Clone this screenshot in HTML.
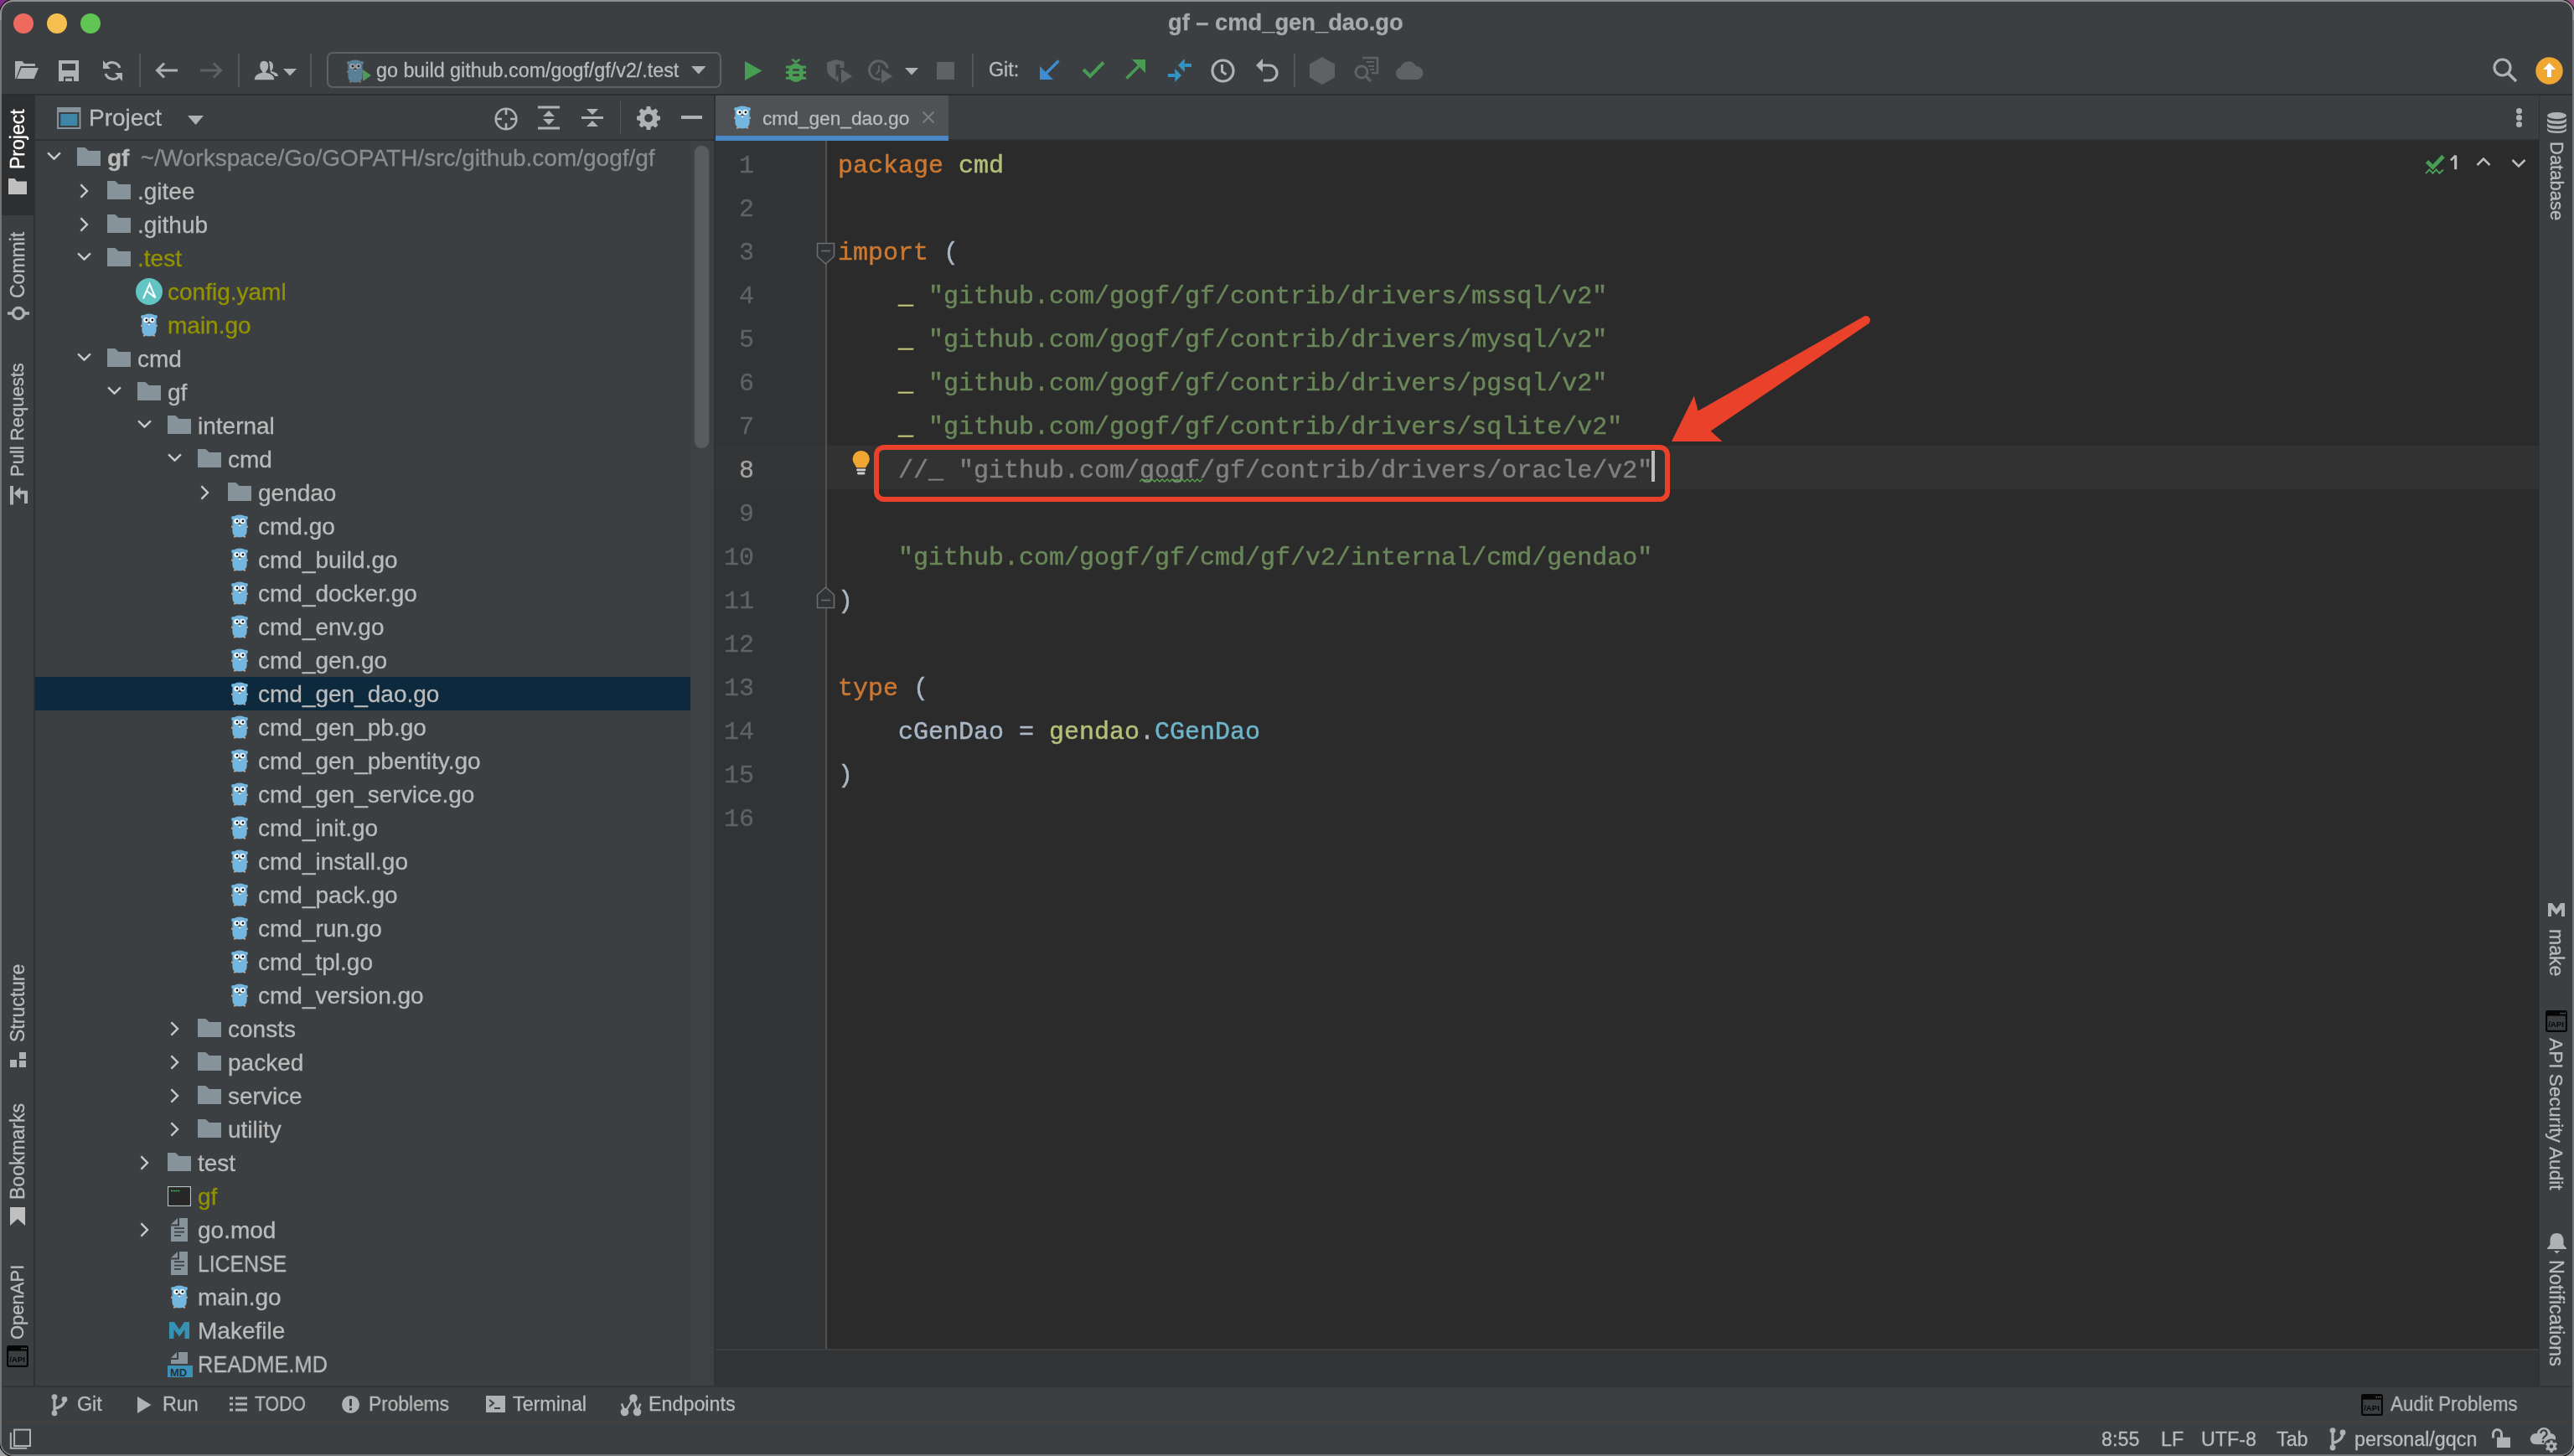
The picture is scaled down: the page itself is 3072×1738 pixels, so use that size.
<!DOCTYPE html><html><head><meta charset="utf-8"><style>
*{margin:0;padding:0;box-sizing:border-box}
html,body{width:3072px;height:1738px;overflow:hidden;background:#9c9c9c}
body{font-family:"Liberation Sans",sans-serif;position:relative}
.a{position:absolute}
.t{position:absolute;white-space:pre;color:#bbbbbb;will-change:transform;-webkit-text-stroke:0.3px currentColor}
svg{position:absolute;overflow:visible}
.code{position:absolute;font-family:"Liberation Mono",monospace;font-size:30px;line-height:52px;white-space:pre;color:#a9b7c6;will-change:transform;-webkit-text-stroke:0.45px currentColor}
.ln{position:absolute;font-family:"Liberation Mono",monospace;font-size:30px;line-height:52px;white-space:pre;color:#606366;text-align:right;width:80px;will-change:transform;-webkit-text-stroke:0.3px currentColor}
.k{color:#cc7832}.s{color:#6a8759}.p{color:#b3c07a}.ty{color:#6fb4c9}.c{color:#808080}.u{color:#c5cb7a}
</style></head><body><div class="a" style="left:0px;top:0px;width:40px;height:40px;background:#7d2a86;"></div><div class="a" style="left:3032px;top:0px;width:40px;height:40px;background:#9a5480;"></div><div class="a" style="left:0px;top:1698px;width:40px;height:40px;background:#a0a0a0;"></div><div class="a" style="left:3032px;top:1698px;width:40px;height:40px;background:#a0a0a0;"></div><div class="a" style="left:0px;top:0px;width:3072px;height:1738px;background:#737577;border-radius:16px;box-shadow:0 0 0 1px #000"></div><div class="a" style="left:0px;top:0px;width:3072px;height:24px;background:#8f8f8f;border-radius:16px 16px 0 0"></div><div class="a" style="left:2px;top:2px;width:3068px;height:1734px;background:#3c3f41;border-radius:14px"></div><div class="a" style="left:2px;top:112px;width:3068px;height:2px;background:#2b2d2f;"></div><div class="a" style="left:2px;top:114px;width:39px;height:1540px;background:#3c3f41;"></div><div class="a" style="left:2px;top:114px;width:39px;height:143px;background:#2d2f31;"></div><div class="a" style="left:40px;top:114px;width:2px;height:1540px;background:#2d2f31;"></div><div class="a" style="left:42px;top:114px;width:810px;height:52px;background:#3c3f41;"></div><div class="a" style="left:42px;top:166px;width:810px;height:2px;background:#2f3133;"></div><div class="a" style="left:824px;top:168px;width:28px;height:1486px;background:#3e4143;"></div><div class="a" style="left:852px;top:114px;width:2px;height:1540px;background:#2f3133;"></div><div class="a" style="left:854px;top:114px;width:2177px;height:52px;background:#3c3f41;"></div><div class="a" style="left:854px;top:114px;width:278px;height:48px;background:#4e5254;"></div><div class="a" style="left:854px;top:162px;width:278px;height:6px;background:#4a88c7;"></div><div class="a" style="left:1132px;top:166px;width:1899px;height:2px;background:#2f3133;"></div><div class="a" style="left:854px;top:168px;width:133px;height:1442px;background:#313335;"></div><div class="a" style="left:985px;top:168px;width:2px;height:1442px;background:#4f5153;"></div><div class="a" style="left:987px;top:168px;width:2044px;height:1442px;background:#2b2b2b;"></div><div class="a" style="left:987px;top:532px;width:2044px;height:52px;background:#323232;"></div><div class="a" style="left:854px;top:532px;width:131px;height:52px;background:#333537;"></div><div class="a" style="left:854px;top:1610px;width:2177px;height:2px;background:#3b3d3f;"></div><div class="a" style="left:854px;top:1612px;width:2177px;height:42px;background:#313335;"></div><div class="a" style="left:3030px;top:114px;width:1px;height:1540px;background:#2f3133;"></div><div class="a" style="left:3031px;top:114px;width:39px;height:1540px;background:#3c3f41;"></div><div class="a" style="left:2px;top:1654px;width:3068px;height:2px;background:#323436;"></div><div class="a" style="left:2px;top:1656px;width:3068px;height:40px;background:#3c3f41;"></div><div class="a" style="left:2px;top:1696px;width:3068px;height:2px;background:#433f3c;"></div><div class="a" style="left:2px;top:1698px;width:3068px;height:38px;background:#3c3f41;border-radius:0 0 14px 14px"></div><svg width="0" height="0" style="position:absolute"><defs>
<symbol id="folder" viewBox="0 0 28 22"><path d="M0 0H8.6Q9.6 0 10.4 .8L13.6 4H28V22H0Z" fill="#87939a"/></symbol>
<symbol id="chd" viewBox="0 0 17 10"><path d="M1.1 1.3L8.5 8.7L15.9 1.3" fill="none" stroke="#c9c9c9" stroke-width="2.4"/></symbol>
<symbol id="chr" viewBox="0 0 11 18"><path d="M1.4 1.4L9 9L1.4 16.6" fill="none" stroke="#c9c9c9" stroke-width="2.4"/></symbol>
<symbol id="gopher" viewBox="0 0 20 28">
<circle cx="2.2" cy="4.2" r="2.1" fill="#73b7e0"/><circle cx="17.8" cy="4.2" r="2.1" fill="#73b7e0"/>
<circle cx="1" cy="14.8" r="1.3" fill="#c9977a"/><circle cx="19" cy="14.8" r="1.3" fill="#c9977a"/>
<circle cx="4.2" cy="26.6" r="1.4" fill="#c9977a"/><circle cx="15.8" cy="26.6" r="1.4" fill="#c9977a"/>
<path d="M10 .6C16.3 .6 18.6 3.5 18.6 8.5V20C18.6 25 15 27.4 10 27.4S1.4 25 1.4 20V8.5C1.4 3.5 3.7 .6 10 .6Z" fill="#73b7e0"/>
<circle cx="6.4" cy="8" r="3.1" fill="#fff"/><circle cx="13.4" cy="8" r="3.1" fill="#fff"/>
<circle cx="6.9" cy="8" r="1.4" fill="#111"/><circle cx="13.9" cy="8" r="1.4" fill="#111"/>
<rect x="9" y="12" width="2" height="2" fill="#fff"/><ellipse cx="10" cy="11.4" rx="1.6" ry="1.1" fill="#5a3d2b"/>
</symbol>
<symbol id="ansible" viewBox="0 0 32 32"><circle cx="16" cy="16" r="16" fill="#62c4c3"/><path d="M9 24.5L16.5 6.8L23.5 23.5L12.8 15" fill="none" stroke="#fff" stroke-width="2"/></symbol>
<symbol id="doc" viewBox="0 0 20 28"><path d="M0 7.6L8 0V7.6Z" fill="#87939a"/><path d="M10 0H20V28H0V9.6H10Z" fill="#87939a"/><path d="M4 12.2H16M4 16.6H16M4 20.8H12" stroke="#3c3f41" stroke-width="1.7"/></symbol>
<symbol id="term" viewBox="0 0 28 24"><rect x=".6" y=".6" width="26.8" height="22.8" fill="#111" stroke="#b9c3c6" stroke-width="1.2"/><rect x="2" y="2" width="24" height="20" fill="#272727"/><path d="M4 5.5H15" stroke="#39c45a" stroke-width="1.6" stroke-dasharray="2 .8"/></symbol>
<symbol id="mk" viewBox="0 0 24 20"><path d="M0 20V0H6L12 9L18 0H24V20H18.5V9L12 17.5L5.5 9V20Z" fill="#3592b5"/></symbol>
<symbol id="md" viewBox="0 0 30 30"><path d="M4 7L11 0V7Z" fill="#87939a"/><path d="M13 0H24V14H4V9H13Z" fill="#87939a"/><rect x="0" y="16" width="30" height="14" fill="#3b91b6"/><text x="3" y="28.5" font-family="Liberation Sans" font-weight="bold" font-size="13" fill="#22333d">MD</text></symbol>
</defs></svg><div class="a" style="left:42px;top:808px;width:782px;height:40px;background:#0d293e;"></div><svg style="left:56px;top:181px" width="17" height="10"><use href="#chd" width="17" height="10"/></svg><svg style="left:92px;top:176px" width="28" height="22"><use href="#folder" width="28" height="22"/></svg><div class="t" style="left:128px;top:169px;font-size:28px;line-height:40px;color:#bbbbbb"><b>gf</b> <span style="color:#8c8c8c;margin-left:5.5px">~/Workspace/Go/GOPATH/src/github.com/gogf/gf</span></div><svg style="left:95px;top:219px" width="11" height="18"><use href="#chr" width="11" height="18"/></svg><svg style="left:128px;top:216px" width="28" height="22"><use href="#folder" width="28" height="22"/></svg><div class="t" style="left:164px;top:209px;font-size:28px;line-height:40px;color:#bbbbbb;">.gitee</div><svg style="left:95px;top:259px" width="11" height="18"><use href="#chr" width="11" height="18"/></svg><svg style="left:128px;top:256px" width="28" height="22"><use href="#folder" width="28" height="22"/></svg><div class="t" style="left:164px;top:249px;font-size:28px;line-height:40px;color:#bbbbbb;">.github</div><svg style="left:92px;top:301px" width="17" height="10"><use href="#chd" width="17" height="10"/></svg><svg style="left:128px;top:296px" width="28" height="22"><use href="#folder" width="28" height="22"/></svg><div class="t" style="left:164px;top:289px;font-size:28px;line-height:40px;color:#949200;">.test</div><svg style="left:162px;top:332px" width="32" height="32"><use href="#ansible" width="32" height="32"/></svg><div class="t" style="left:200px;top:329px;font-size:28px;line-height:40px;color:#949200;">config.yaml</div><svg style="left:168px;top:374px" width="20" height="28"><use href="#gopher" width="20" height="28"/></svg><div class="t" style="left:200px;top:369px;font-size:28px;line-height:40px;color:#949200;">main.go</div><svg style="left:92px;top:421px" width="17" height="10"><use href="#chd" width="17" height="10"/></svg><svg style="left:128px;top:416px" width="28" height="22"><use href="#folder" width="28" height="22"/></svg><div class="t" style="left:164px;top:409px;font-size:28px;line-height:40px;color:#bbbbbb;">cmd</div><svg style="left:128px;top:461px" width="17" height="10"><use href="#chd" width="17" height="10"/></svg><svg style="left:164px;top:456px" width="28" height="22"><use href="#folder" width="28" height="22"/></svg><div class="t" style="left:200px;top:449px;font-size:28px;line-height:40px;color:#bbbbbb;">gf</div><svg style="left:164px;top:501px" width="17" height="10"><use href="#chd" width="17" height="10"/></svg><svg style="left:200px;top:496px" width="28" height="22"><use href="#folder" width="28" height="22"/></svg><div class="t" style="left:236px;top:489px;font-size:28px;line-height:40px;color:#bbbbbb;">internal</div><svg style="left:200px;top:541px" width="17" height="10"><use href="#chd" width="17" height="10"/></svg><svg style="left:236px;top:536px" width="28" height="22"><use href="#folder" width="28" height="22"/></svg><div class="t" style="left:272px;top:529px;font-size:28px;line-height:40px;color:#bbbbbb;">cmd</div><svg style="left:239px;top:579px" width="11" height="18"><use href="#chr" width="11" height="18"/></svg><svg style="left:272px;top:576px" width="28" height="22"><use href="#folder" width="28" height="22"/></svg><div class="t" style="left:308px;top:569px;font-size:28px;line-height:40px;color:#bbbbbb;">gendao</div><svg style="left:276px;top:614px" width="20" height="28"><use href="#gopher" width="20" height="28"/></svg><div class="t" style="left:308px;top:609px;font-size:28px;line-height:40px;color:#bbbbbb;">cmd.go</div><svg style="left:276px;top:654px" width="20" height="28"><use href="#gopher" width="20" height="28"/></svg><div class="t" style="left:308px;top:649px;font-size:28px;line-height:40px;color:#bbbbbb;">cmd_build.go</div><svg style="left:276px;top:694px" width="20" height="28"><use href="#gopher" width="20" height="28"/></svg><div class="t" style="left:308px;top:689px;font-size:28px;line-height:40px;color:#bbbbbb;">cmd_docker.go</div><svg style="left:276px;top:734px" width="20" height="28"><use href="#gopher" width="20" height="28"/></svg><div class="t" style="left:308px;top:729px;font-size:28px;line-height:40px;color:#bbbbbb;">cmd_env.go</div><svg style="left:276px;top:774px" width="20" height="28"><use href="#gopher" width="20" height="28"/></svg><div class="t" style="left:308px;top:769px;font-size:28px;line-height:40px;color:#bbbbbb;">cmd_gen.go</div><svg style="left:276px;top:814px" width="20" height="28"><use href="#gopher" width="20" height="28"/></svg><div class="t" style="left:308px;top:809px;font-size:28px;line-height:40px;color:#bbbbbb;">cmd_gen_dao.go</div><svg style="left:276px;top:854px" width="20" height="28"><use href="#gopher" width="20" height="28"/></svg><div class="t" style="left:308px;top:849px;font-size:28px;line-height:40px;color:#bbbbbb;">cmd_gen_pb.go</div><svg style="left:276px;top:894px" width="20" height="28"><use href="#gopher" width="20" height="28"/></svg><div class="t" style="left:308px;top:889px;font-size:28px;line-height:40px;color:#bbbbbb;">cmd_gen_pbentity.go</div><svg style="left:276px;top:934px" width="20" height="28"><use href="#gopher" width="20" height="28"/></svg><div class="t" style="left:308px;top:929px;font-size:28px;line-height:40px;color:#bbbbbb;">cmd_gen_service.go</div><svg style="left:276px;top:974px" width="20" height="28"><use href="#gopher" width="20" height="28"/></svg><div class="t" style="left:308px;top:969px;font-size:28px;line-height:40px;color:#bbbbbb;">cmd_init.go</div><svg style="left:276px;top:1014px" width="20" height="28"><use href="#gopher" width="20" height="28"/></svg><div class="t" style="left:308px;top:1009px;font-size:28px;line-height:40px;color:#bbbbbb;">cmd_install.go</div><svg style="left:276px;top:1054px" width="20" height="28"><use href="#gopher" width="20" height="28"/></svg><div class="t" style="left:308px;top:1049px;font-size:28px;line-height:40px;color:#bbbbbb;">cmd_pack.go</div><svg style="left:276px;top:1094px" width="20" height="28"><use href="#gopher" width="20" height="28"/></svg><div class="t" style="left:308px;top:1089px;font-size:28px;line-height:40px;color:#bbbbbb;">cmd_run.go</div><svg style="left:276px;top:1134px" width="20" height="28"><use href="#gopher" width="20" height="28"/></svg><div class="t" style="left:308px;top:1129px;font-size:28px;line-height:40px;color:#bbbbbb;">cmd_tpl.go</div><svg style="left:276px;top:1174px" width="20" height="28"><use href="#gopher" width="20" height="28"/></svg><div class="t" style="left:308px;top:1169px;font-size:28px;line-height:40px;color:#bbbbbb;">cmd_version.go</div><svg style="left:203px;top:1219px" width="11" height="18"><use href="#chr" width="11" height="18"/></svg><svg style="left:236px;top:1216px" width="28" height="22"><use href="#folder" width="28" height="22"/></svg><div class="t" style="left:272px;top:1209px;font-size:28px;line-height:40px;color:#bbbbbb;">consts</div><svg style="left:203px;top:1259px" width="11" height="18"><use href="#chr" width="11" height="18"/></svg><svg style="left:236px;top:1256px" width="28" height="22"><use href="#folder" width="28" height="22"/></svg><div class="t" style="left:272px;top:1249px;font-size:28px;line-height:40px;color:#bbbbbb;">packed</div><svg style="left:203px;top:1299px" width="11" height="18"><use href="#chr" width="11" height="18"/></svg><svg style="left:236px;top:1296px" width="28" height="22"><use href="#folder" width="28" height="22"/></svg><div class="t" style="left:272px;top:1289px;font-size:28px;line-height:40px;color:#bbbbbb;">service</div><svg style="left:203px;top:1339px" width="11" height="18"><use href="#chr" width="11" height="18"/></svg><svg style="left:236px;top:1336px" width="28" height="22"><use href="#folder" width="28" height="22"/></svg><div class="t" style="left:272px;top:1329px;font-size:28px;line-height:40px;color:#bbbbbb;">utility</div><svg style="left:167px;top:1379px" width="11" height="18"><use href="#chr" width="11" height="18"/></svg><svg style="left:200px;top:1376px" width="28" height="22"><use href="#folder" width="28" height="22"/></svg><div class="t" style="left:236px;top:1369px;font-size:28px;line-height:40px;color:#bbbbbb;">test</div><svg style="left:200px;top:1416px" width="28" height="24"><use href="#term" width="28" height="24"/></svg><div class="t" style="left:236px;top:1409px;font-size:28px;line-height:40px;color:#949200;">gf</div><svg style="left:167px;top:1459px" width="11" height="18"><use href="#chr" width="11" height="18"/></svg><svg style="left:204px;top:1454px" width="20" height="28"><use href="#doc" width="20" height="28"/></svg><div class="t" style="left:236px;top:1449px;font-size:28px;line-height:40px;color:#bbbbbb;">go.mod</div><svg style="left:204px;top:1494px" width="20" height="28"><use href="#doc" width="20" height="28"/></svg><div class="t" style="left:236px;top:1489px;font-size:28px;line-height:40px;color:#bbbbbb;;transform:scaleX(0.885);transform-origin:0 0">LICENSE</div><svg style="left:204px;top:1534px" width="20" height="28"><use href="#gopher" width="20" height="28"/></svg><div class="t" style="left:236px;top:1529px;font-size:28px;line-height:40px;color:#bbbbbb;">main.go</div><svg style="left:202px;top:1578px" width="24" height="20"><use href="#mk" width="24" height="20"/></svg><div class="t" style="left:236px;top:1569px;font-size:28px;line-height:40px;color:#bbbbbb;">Makefile</div><svg style="left:200px;top:1614px" width="30" height="30"><use href="#md" width="30" height="30"/></svg><div class="t" style="left:236px;top:1609px;font-size:28px;line-height:40px;color:#bbbbbb;;transform:scaleX(0.905);transform-origin:0 0">README.MD</div><div class="ln" style="left:819.5px;top:171.5px;">1</div><div class="code" style="left:1000px;top:172px"><span class="k">package</span> <span class="p">cmd</span></div><div class="ln" style="left:819.5px;top:223.5px;">2</div><div class="ln" style="left:819.5px;top:275.5px;">3</div><div class="code" style="left:1000px;top:276px"><span class="k">import</span> (</div><div class="ln" style="left:819.5px;top:327.5px;">4</div><div class="code" style="left:1000px;top:328px">    <span class="u">_</span> <span class="s">"github.com/gogf/gf/contrib/drivers/mssql/v2"</span></div><div class="ln" style="left:819.5px;top:379.5px;">5</div><div class="code" style="left:1000px;top:380px">    <span class="u">_</span> <span class="s">"github.com/gogf/gf/contrib/drivers/mysql/v2"</span></div><div class="ln" style="left:819.5px;top:431.5px;">6</div><div class="code" style="left:1000px;top:432px">    <span class="u">_</span> <span class="s">"github.com/gogf/gf/contrib/drivers/pgsql/v2"</span></div><div class="ln" style="left:819.5px;top:483.5px;">7</div><div class="code" style="left:1000px;top:484px">    <span class="u">_</span> <span class="s">"github.com/gogf/gf/contrib/drivers/sqlite/v2"</span></div><div class="ln" style="left:819.5px;top:535.5px;color:#a4a3a3">8</div><div class="code" style="left:1000px;top:536px">    <span class="c">//_ "github.com/gogf/gf/contrib/drivers/oracle/v2"</span></div><div class="ln" style="left:819.5px;top:587.5px;">9</div><div class="ln" style="left:819.5px;top:639.5px;">10</div><div class="code" style="left:1000px;top:640px">    <span class="s">"github.com/gogf/gf/cmd/gf/v2/internal/cmd/gendao"</span></div><div class="ln" style="left:819.5px;top:691.5px;">11</div><div class="code" style="left:1000px;top:692px">)</div><div class="ln" style="left:819.5px;top:743.5px;">12</div><div class="ln" style="left:819.5px;top:795.5px;">13</div><div class="code" style="left:1000px;top:796px"><span class="k">type</span> (</div><div class="ln" style="left:819.5px;top:847.5px;">14</div><div class="code" style="left:1000px;top:848px">    cGenDao = <span class="p">gendao</span>.<span class="ty">CGenDao</span></div><div class="ln" style="left:819.5px;top:899.5px;">15</div><div class="code" style="left:1000px;top:900px">)</div><div class="ln" style="left:819.5px;top:951.5px;">16</div><svg style="left:974px;top:289px" width="24" height="30"><path d="M1.5 1.5H21.5V17L11.5 26L1.5 17Z" fill="#313335" stroke="#6a6c6e" stroke-width="1.6"/><path d="M6 10.5H17" stroke="#6a6c6e" stroke-width="1.6"/></svg><svg style="left:974px;top:699px" width="24" height="30"><path d="M1.5 26.5H21.5V11L11.5 2L1.5 11Z" fill="#313335" stroke="#6a6c6e" stroke-width="1.6"/><path d="M6 17.5H17" stroke="#6a6c6e" stroke-width="1.6"/></svg><svg style="left:1016px;top:536px" width="24" height="32"><path d="M11.7 1.9A10.1 10.1 0 0 1 21.8 12C21.8 15.5 19.5 18 17.2 22.3H6.2C3.9 18 1.6 15.5 1.6 12A10.1 10.1 0 0 1 11.7 1.9Z" fill="#f0a732"/><rect x="6.2" y="23.4" width="11" height="2.8" rx="1" fill="#cfcfcf"/><rect x="7" y="27.6" width="9.4" height="2.8" rx="1.4" fill="#cfcfcf"/></svg><svg style="left:1360px;top:570px" width="76" height="8"><path d="M0 5 L3 2 L6 5 L9 2 L12 5 L15 2 L18 5 L21 2 L24 5 L27 2 L30 5 L33 2 L36 5 L39 2 L42 5 L45 2 L48 5 L51 2 L54 5 L57 2 L60 5 L63 2 L66 5 L69 2 L72 5 L75 2" fill="none" stroke="#56a34a" stroke-width="1.3"/></svg><div class="a" style="left:1971px;top:538px;width:4px;height:37px;background:#bbbbbb;"></div><div class="a" style="left:1043px;top:531px;width:949.5px;height:68px;border:6.6px solid #e9412a;border-radius:12px"></div><svg style="left:0;top:0" width="3072" height="1738"><path d="M2223 378.5L2026.6 490.5L2021.8 472.6L1995 526.9L2055.5 526.9L2041.7 514.5L2231.3 385.4Z" fill="#e9412a"/><circle cx="2227" cy="382" r="5" fill="#e9412a"/></svg><svg style="left:2890px;top:180px" width="40" height="32"><path d="M6.5 12.8L13.5 19.6L26 6.5" fill="none" stroke="#499c54" stroke-width="4.8"/><path d="M5 27.2L9.5 22.5L13.5 26.8L17.5 22.5L21.5 26.8L26 22.5" fill="none" stroke="#499c54" stroke-width="1.9"/></svg><svg style="left:2922px;top:184px" width="12" height="20"><path d="M8.7 1.6V18.2" stroke="#bdbdbd" stroke-width="3.1"/><path d="M3 7.4L8.7 1.6" stroke="#bdbdbd" stroke-width="2.6"/></svg><svg style="left:2955px;top:187px" width="18" height="12"><path d="M1.5 10L9 2.5L16.5 10" fill="none" stroke="#bdbdbd" stroke-width="2.5"/></svg><svg style="left:2997px;top:188.5px" width="18" height="12"><path d="M1.5 2L9 9.5L16.5 2" fill="none" stroke="#bdbdbd" stroke-width="2.5"/></svg><svg style="left:876px;top:126px" width="20" height="28"><use href="#gopher" width="20" height="28"/></svg><div class="t" style="left:910px;top:124.5px;font-size:22.7px;line-height:32px;color:#bbbbbb;">cmd_gen_dao.go</div><svg style="left:1100px;top:132px" width="16" height="16"><path d="M1.5 1.5L14.5 14.5M14.5 1.5L1.5 14.5" stroke="#7b7e80" stroke-width="2"/></svg><div class="a" style="left:3002.5px;top:128.5px;width:7px;height:7px;border-radius:50%;background:#afb1b3"></div><div class="a" style="left:3002.5px;top:136.5px;width:7px;height:7px;border-radius:50%;background:#afb1b3"></div><div class="a" style="left:3002.5px;top:144.5px;width:7px;height:7px;border-radius:50%;background:#afb1b3"></div><svg style="left:67.5px;top:128px" width="29" height="26"><rect x="0" y="0" width="28.5" height="26" fill="#87939a"/><rect x="2" y="6" width="24.5" height="18" fill="#3c3f41"/><rect x="4.3" y="8" width="20" height="14" fill="#3d86a8"/></svg><div class="t" style="left:106px;top:125px;font-size:28px;line-height:32px;color:#bbbbbb;">Project</div><svg style="left:224px;top:137.5px" width="20" height="12"><path d="M0 0H19L9.5 11Z" fill="#afb1b3"/></svg><svg style="left:589px;top:127px" width="30" height="30"><circle cx="15" cy="15" r="12.3" fill="none" stroke="#afb1b3" stroke-width="2.6"/><path d="M15 2V10M15 20V28M2 15H10M20 15H28" stroke="#afb1b3" stroke-width="2.6"/></svg><svg style="left:642px;top:126px" width="27" height="30"><path d="M0 2H26M0 27H26" stroke="#afb1b3" stroke-width="3"/><path d="M13 6L20 13H6Z M13 23L20 16H6Z" fill="#afb1b3"/></svg><svg style="left:694px;top:126px" width="27" height="30"><path d="M0 14.5H26" stroke="#afb1b3" stroke-width="3"/><path d="M13 11L20 4H6Z M13 18L20 25H6Z" fill="#afb1b3"/></svg><div class="a" style="left:740px;top:121px;width:1px;height:38px;background:#555759;"></div><svg style="left:760px;top:127px" width="28" height="28" viewBox="0 0 28 28"><path fill="#afb1b3" fill-rule="evenodd" d="M11.8 1H16.2L16.9 4.6L19.3 5.6L22.3 3.5L25.4 6.6L23.4 9.6L24.4 12L28 12.7V17.1L24.4 17.8L23.4 20.2L25.4 23.2L22.3 26.3L19.3 24.2L16.9 25.2L16.2 28.8H11.8L11.1 25.2L8.7 24.2L5.7 26.3L2.6 23.2L4.6 20.2L3.6 17.8L0 17.1V12.7L3.6 12L4.6 9.6L2.6 6.6L5.7 3.5L8.7 5.6L11.1 4.6Z M14 10A4.9 4.9 0 1 0 14 19.8A4.9 4.9 0 1 0 14 10Z" transform="translate(0,-.9)"/></svg><div class="a" style="left:813px;top:138px;width:25px;height:4px;background:#afb1b3;"></div><div class="a" style="left:828px;top:173px;width:19px;height:363px;border-radius:10px;background:#595b5d;border:1px solid #454749"></div><div class="a" style="left:16px;top:16px;width:24px;height:24px;border-radius:50%;background:#ee6a5f"></div><div class="a" style="left:56px;top:16px;width:24px;height:24px;border-radius:50%;background:#f5bf4f"></div><div class="a" style="left:96px;top:16px;width:24px;height:24px;border-radius:50%;background:#61c554"></div><div class="t" style="left:1394px;top:11px;font-size:27.3px;line-height:32px;color:#a8a9ab;font-weight:bold">gf – cmd_gen_dao.go</div><svg style="left:18px;top:73px" width="28" height="21"><path d="M0 0H8.5L11 3H24V6H6.5L1 21H0Z" fill="#afb1b3"/><path d="M7.5 8H28L22.5 21H2Z" fill="#afb1b3"/></svg><svg style="left:70px;top:72px" width="24" height="25"><path fill="#afb1b3" fill-rule="evenodd" d="M0 0H24V25H0Z M4 4V12H20V4Z M6 19.5V25H18V19.5Z"/><rect x="8" y="21.5" width="8" height="3.5" fill="#afb1b3"/></svg><svg style="left:122px;top:72px" width="25" height="25"><path d="M21 9A9.5 9.5 0 0 0 4 7" fill="none" stroke="#afb1b3" stroke-width="3"/><path d="M4 16A9.5 9.5 0 0 0 21 18" fill="none" stroke="#afb1b3" stroke-width="3"/><path d="M1 0V10H10Z" fill="#afb1b3"/><path d="M24 25V15H15Z" fill="#afb1b3"/></svg><div class="a" style="left:166px;top:64px;width:2px;height:40px;background:#555759;"></div><svg style="left:185px;top:74px" width="28" height="20"><path d="M2.5 10H27M11 1.5L2.5 10L11 18.5" fill="none" stroke="#afb1b3" stroke-width="3"/></svg><svg style="left:239px;top:74px" width="28" height="20"><path d="M0 10H24.5M16 1.5L24.5 10L16 18.5" fill="none" stroke="#5f6163" stroke-width="3"/></svg><div class="a" style="left:284px;top:64px;width:2px;height:40px;background:#555759;"></div><svg style="left:303px;top:71px" width="30" height="25"><path d="M18 2C21 2 23 4.5 23 8C23 11 21.5 13 20.5 14C25 15 29 16.5 29 20H25C24 18 22 17 20 16.5" fill="#afb1b3"/><path d="M12 1C16 1 18 4 18 8C18 11.5 16.5 13.5 15 15C20 16 25 18 25 24V25H0V24C0 18 5 16 9.5 15C8 13.5 6.5 11.5 6.5 8C6.5 4 8.5 1 12 1Z" fill="#afb1b3" stroke="#3c3f41" stroke-width="1.4"/></svg><svg style="left:338px;top:82px" width="17" height="9"><path d="M0 0H16L8 8.5Z" fill="#afb1b3"/></svg><div class="a" style="left:370px;top:64px;width:2px;height:40px;background:#555759;"></div><div class="a" style="left:390px;top:62px;width:471px;height:43px;border:2px solid #5e6163;border-radius:7px"></div><svg style="left:414px;top:71px" width="30" height="28"><g opacity=".55"><use href="#gopher" x="0" y="0" width="20" height="28"/></g><path d="M19 12L29 19L19 26Z" fill="#4e9a57"/></svg><div class="t" style="left:449px;top:68px;font-size:23.3px;line-height:32px;color:#bbbbbb;">go build github.com/gogf/gf/v2/.test</div><svg style="left:825px;top:79px" width="18" height="10"><path d="M0 0H17.5L8.75 9.5Z" fill="#afb1b3"/></svg><svg style="left:889px;top:73px" width="21" height="23"><path d="M0 0L20.5 11.5L0 23Z" fill="#499c54"/></svg><svg style="left:937px;top:70px" width="26" height="28"><path d="M8.2 .7L12.85 4.2L17.5 .7" fill="none" stroke="#499c54" stroke-width="2.6"/><rect x="4.1" y="5.6" width="17.6" height="22.3" rx="8.8" fill="#499c54"/><path d="M.9 10.1H25.1M.9 16.45H25.1M.9 23.25H25.1" stroke="#499c54" stroke-width="3"/><path d="M9.3 13.45H16.9M9.3 19.6H16.9" stroke="#3c3f41" stroke-width="2.6"/></svg><svg style="left:987px;top:71px" width="32" height="30"><path d="M0 3.5L10.5 0L20.5 2.5V10H15.5V6H10.5V24.5L5 21C1.5 18 0 15 0 11Z" fill="#5f6163"/><path d="M10.5 24.5V21.5L13.5 18.5V27Z" fill="#5f6163"/><path d="M17 11.5L30.3 20.1L17 28.5Z" fill="#5f6163"/></svg><svg style="left:1035px;top:71px" width="32" height="30"><path d="M15.7 23.5A11 11 0 1 1 24.3 10.5" fill="none" stroke="#5f6163" stroke-width="3"/><path d="M14 7V13.5L10.5 17.5" fill="none" stroke="#5f6163" stroke-width="2.2"/><path d="M17 11.5L30.3 20.1L17 28.5Z" fill="#5f6163"/></svg><svg style="left:1080px;top:81px" width="17" height="9"><path d="M0 0H16L8 8.5Z" fill="#afb1b3"/></svg><div class="a" style="left:1118px;top:74px;width:21px;height:21px;background:#5f6163;"></div><div class="a" style="left:1160px;top:64px;width:2px;height:40px;background:#555759;"></div><div class="t" style="left:1180px;top:67px;font-size:23.3px;line-height:32px;color:#bbbbbb;">Git:</div><svg style="left:1241px;top:71px" width="24" height="24"><path d="M22.5 1.5L5 19" stroke="#3d8dd0" stroke-width="3.4"/><path d="M0 24V8L16 24Z" fill="#3d8dd0"/></svg><svg style="left:1291px;top:72px" width="28" height="22"><path d="M2 11L10 19L26 2.5" fill="none" stroke="#499c54" stroke-width="4"/></svg><svg style="left:1343px;top:71px" width="24" height="24"><path d="M1.5 22.5L19 5" stroke="#499c54" stroke-width="3.4"/><path d="M24 0V16L8 0Z" fill="#499c54"/></svg><svg style="left:1393px;top:68px" width="30" height="31"><path d="M13 9.9L20.8 1.9V18Z" fill="#3592c4"/><rect x="20.5" y="7.9" width="8.5" height="4" fill="#3592c4"/><path d="M17 22L9.3 14V29.9Z" fill="#3592c4"/><rect x="0.9" y="20" width="8.6" height="4" fill="#3592c4"/></svg><svg style="left:1445px;top:70px" width="29" height="29"><circle cx="14.5" cy="14.5" r="12.5" fill="none" stroke="#afb1b3" stroke-width="3.2"/><path d="M13.5 7V15.5L18.5 19" fill="none" stroke="#afb1b3" stroke-width="3"/></svg><svg style="left:1499px;top:70px" width="28" height="28"><path d="M5 8H16A9 9 0 0 1 16 26H9" fill="none" stroke="#afb1b3" stroke-width="3.2"/><path d="M0 8L8 0V16Z" fill="#afb1b3"/></svg><div class="a" style="left:1544px;top:64px;width:2px;height:40px;background:#555759;"></div><svg style="left:1563px;top:68px" width="30" height="33"><path d="M15 0L30 8.5V24.5L15 33L0 24.5V8.5Z" fill="#5f6163"/></svg><svg style="left:1615px;top:69px" width="30" height="30"><path d="M11 0H29V18H22" fill="none" stroke="#5f6163" stroke-width="2.6"/><path d="M16 5H25M18 10H25M20 14H25" stroke="#5f6163" stroke-width="2"/><circle cx="10" cy="17" r="7" fill="none" stroke="#5f6163" stroke-width="3"/><path d="M15 22L21 28" stroke="#5f6163" stroke-width="3.4"/></svg><svg style="left:1665px;top:74px" width="34" height="21"><path d="M8 21A7.5 7.5 0 0 1 6.5 6.3A10 10 0 0 1 25 5A8 8 0 0 1 26 21Z" fill="#5f6163"/></svg><svg style="left:2975px;top:69px" width="30" height="30"><circle cx="11.5" cy="11.5" r="9.5" fill="none" stroke="#afb1b3" stroke-width="3.2"/><path d="M18.5 18.5L28 28" stroke="#afb1b3" stroke-width="3.6"/></svg><svg style="left:3026px;top:68px" width="33" height="33"><circle cx="16.5" cy="16.5" r="16.2" fill="#f0a732"/><path d="M16.5 7L24 15H19V24H14V15H9Z" fill="#fff"/></svg><div class="t" style="left:20.5px;top:202px;font-size:23px;line-height:28px;color:#ffffff;transform-origin:0 0;transform:rotate(-90deg) translate(0,-14px)">Project</div><div class="t" style="left:20.5px;top:356px;font-size:23px;line-height:28px;color:#bbbbbb;transform-origin:0 0;transform:rotate(-90deg) translate(0,-14px)">Commit</div><div class="t" style="left:20.5px;top:569px;font-size:22px;line-height:28px;color:#bbbbbb;transform-origin:0 0;transform:rotate(-90deg) translate(0,-14px)">Pull Requests</div><div class="t" style="left:20.5px;top:1244px;font-size:23px;line-height:28px;color:#bbbbbb;transform-origin:0 0;transform:rotate(-90deg) translate(0,-14px)">Structure</div><div class="t" style="left:20.5px;top:1432px;font-size:23px;line-height:28px;color:#bbbbbb;transform-origin:0 0;transform:rotate(-90deg) translate(0,-14px)">Bookmarks</div><div class="t" style="left:20.5px;top:1598.5px;font-size:22px;line-height:28px;color:#bbbbbb;transform-origin:0 0;transform:rotate(-90deg) translate(0,-14px)">OpenAPI</div><svg style="left:9.5px;top:213px" width="23" height="19"><path d="M0 0H7.5L10 3.5H22V19H0Z" fill="#c0c0c0"/></svg><svg style="left:9px;top:364px" width="26" height="20"><circle cx="13" cy="10" r="6.5" fill="none" stroke="#afb1b3" stroke-width="3.4"/><path d="M0 10H6M20 10H26" stroke="#afb1b3" stroke-width="3.4"/></svg><svg style="left:11.5px;top:579.5px" width="22" height="23"><rect x="0" y="0" width="4" height="22.5" fill="#afb1b3"/><path d="M4.5 8.7L12.3 1.5V15.9Z" fill="#afb1b3"/><path d="M12 5.8H21V21H17V9.8H12Z" fill="#afb1b3"/></svg><svg style="left:12px;top:1256px" width="19" height="18"><rect x="0" y="9" width="8" height="9" fill="#afb1b3"/><rect x="11" y="0" width="8" height="8" fill="#afb1b3"/><rect x="11" y="10" width="8" height="8" fill="#afb1b3"/></svg><svg style="left:12px;top:1441px" width="18" height="22"><path d="M0 0H18V22L9 14L0 22Z" fill="#c0c0c0"/></svg><svg style="left:8px;top:1606px" width="26" height="26" viewBox="0 0 26 26"><rect x="1.1" y="1.1" width="23.8" height="23.8" rx="1.6" fill="#3c3f41" stroke="#060606" stroke-width="2.2"/><rect x="1" y="1" width="24" height="5.6" fill="#060606"/><circle cx="18.3" cy="3.6" r=".9" fill="#6a6a6a"/><circle cx="20.9" cy="3.6" r=".9" fill="#6a6a6a"/><circle cx="23.4" cy="3.6" r=".9" fill="#6a6a6a"/><text x="3.2" y="19.6" font-family="Liberation Sans" font-weight="bold" font-size="9.6" fill="#060606">/API</text></svg><div class="t" style="left:3051px;top:168.5px;font-size:22px;line-height:28px;color:#bbbbbb;transform-origin:0 0;transform:rotate(90deg) translate(0,-14px)">Database</div><div class="t" style="left:3051px;top:1109px;font-size:23px;line-height:28px;color:#bbbbbb;transform-origin:0 0;transform:rotate(90deg) translate(0,-14px)">make</div><div class="t" style="left:3051px;top:1239px;font-size:22.7px;line-height:28px;color:#bbbbbb;transform-origin:0 0;transform:rotate(90deg) translate(0,-14px)">API Security Audit</div><div class="t" style="left:3051px;top:1504px;font-size:23.3px;line-height:28px;color:#bbbbbb;transform-origin:0 0;transform:rotate(90deg) translate(0,-14px)">Notifications</div><svg style="left:3040px;top:134px" width="23" height="25"><ellipse cx="11.5" cy="4" rx="11.5" ry="4" fill="#afb1b3"/><path d="M0 6.5C0 9 5 10.5 11.5 10.5S23 9 23 6.5V10C23 12.5 18 14 11.5 14S0 12.5 0 10Z M0 12.5C0 15 5 16.5 11.5 16.5S23 15 23 12.5V16C23 18.5 18 20 11.5 20S0 18.5 0 16Z M0 18.5C0 21 5 22.5 11.5 22.5S23 21 23 18.5V21C23 23.5 18 25 11.5 25S0 23.5 0 21Z" fill="#afb1b3"/></svg><svg style="left:3041px;top:1078px" width="20" height="16"><path d="M0 16V0H5L10 7L15 0H20V16H16V7L10 14L4 7V16Z" fill="#afb1b3"/></svg><svg style="left:3038px;top:1206px" width="26" height="26" viewBox="0 0 26 26"><rect x="1.1" y="1.1" width="23.8" height="23.8" rx="1.6" fill="#3c3f41" stroke="#060606" stroke-width="2.2"/><rect x="1" y="1" width="24" height="5.6" fill="#060606"/><circle cx="18.3" cy="3.6" r=".9" fill="#6a6a6a"/><circle cx="20.9" cy="3.6" r=".9" fill="#6a6a6a"/><circle cx="23.4" cy="3.6" r=".9" fill="#6a6a6a"/><text x="3.2" y="19.6" font-family="Liberation Sans" font-weight="bold" font-size="9.6" fill="#060606">/API</text></svg><svg style="left:3040px;top:1472px" width="23" height="25"><path d="M11.5 0C17 0 19.5 4 19.5 9V14L23 18V19H0V18L3.5 14V9C3.5 4 6 0 11.5 0Z" fill="#afb1b3"/><path d="M8 21H15L11.5 24.5Z" fill="#afb1b3"/></svg><svg style="left:61px;top:1664px" width="22" height="28"><circle cx="4" cy="3.6" r="3.4" fill="#afb1b3"/><circle cx="16" cy="6.5" r="3.4" fill="#afb1b3"/><circle cx="4" cy="22.8" r="3.4" fill="#afb1b3"/><path d="M4 3.6V22.8M4 17.5C11 16 16 12.5 16 6.5" fill="none" stroke="#afb1b3" stroke-width="3.2"/></svg><div class="t" style="left:92px;top:1660px;font-size:23.3px;line-height:32px;color:#bbbbbb;">Git</div><svg style="left:164px;top:1667px" width="17" height="20"><path d="M0 0L16.5 10L0 20Z" fill="#afb1b3"/></svg><div class="t" style="left:194px;top:1660px;font-size:23.3px;line-height:32px;color:#bbbbbb;">Run</div><svg style="left:274px;top:1667px" width="21" height="18"><path d="M0 2H4M7 2H21M0 9H4M7 9H21M0 16H4M7 16H21" stroke="#afb1b3" stroke-width="3"/></svg><div class="t" style="left:304px;top:1660px;font-size:23.3px;line-height:32px;color:#bbbbbb;;transform:scaleX(0.91);transform-origin:0 0">TODO</div><svg style="left:408px;top:1666px" width="21" height="21"><circle cx="10.5" cy="10.5" r="10.5" fill="#afb1b3"/><path d="M10.5 4V12.5" stroke="#3c3f41" stroke-width="3"/><rect x="9" y="14.5" width="3" height="3" fill="#3c3f41"/></svg><div class="t" style="left:440px;top:1660px;font-size:23.3px;line-height:32px;color:#bbbbbb;;transform:scaleX(0.975);transform-origin:0 0">Problems</div><svg style="left:580px;top:1666px" width="23" height="20"><rect width="23" height="20" fill="#afb1b3"/><path d="M4 5L9 9L4 13M10 15H17" fill="none" stroke="#3c3f41" stroke-width="2"/></svg><div class="t" style="left:612px;top:1660px;font-size:23.3px;line-height:32px;color:#bbbbbb;">Terminal</div><svg style="left:739px;top:1663px" width="28" height="28"><path d="M17 6L8 21M17 6L21 21M3 12.5L6.5 22M25.5 12.5L21.5 22" stroke="#afb1b3" stroke-width="2.4" fill="none"/><circle cx="17" cy="6" r="4.8" fill="#afb1b3"/><circle cx="6.5" cy="22.5" r="4.8" fill="#afb1b3"/><circle cx="21.5" cy="22.5" r="4.8" fill="#afb1b3"/></svg><div class="t" style="left:774px;top:1660px;font-size:23.3px;line-height:32px;color:#bbbbbb;">Endpoints</div><svg style="left:2818px;top:1664px" width="26" height="26" viewBox="0 0 26 26"><rect x="1.1" y="1.1" width="23.8" height="23.8" rx="1.6" fill="#3c3f41" stroke="#060606" stroke-width="2.2"/><rect x="1" y="1" width="24" height="5.6" fill="#060606"/><circle cx="18.3" cy="3.6" r=".9" fill="#6a6a6a"/><circle cx="20.9" cy="3.6" r=".9" fill="#6a6a6a"/><circle cx="23.4" cy="3.6" r=".9" fill="#6a6a6a"/><text x="3.2" y="19.6" font-family="Liberation Sans" font-weight="bold" font-size="9.6" fill="#060606">/API</text></svg><div class="t" style="left:2853px;top:1660px;font-size:23.3px;line-height:32px;color:#bbbbbb;;transform:scaleX(0.96);transform-origin:0 0">Audit Problems</div><svg style="left:10px;top:1704px" width="28" height="28"><path d="M2.8 6V24.7H22.2" fill="none" stroke="#afb1b3" stroke-width="2"/><rect x="7.1" y="2.6" width="18.9" height="19.4" fill="none" stroke="#afb1b3" stroke-width="2"/></svg><div class="t" style="left:2508px;top:1702px;font-size:23.3px;line-height:32px;color:#bbbbbb;">8:55</div><div class="t" style="left:2579px;top:1702px;font-size:23.3px;line-height:32px;color:#bbbbbb;">LF</div><div class="t" style="left:2627px;top:1702px;font-size:23.3px;line-height:32px;color:#bbbbbb;">UTF-8</div><div class="t" style="left:2717px;top:1702px;font-size:23.3px;line-height:32px;color:#bbbbbb;">Tab</div><svg style="left:2780px;top:1704px" width="22" height="28"><circle cx="4" cy="3.6" r="3.4" fill="#afb1b3"/><circle cx="16" cy="6" r="3.4" fill="#afb1b3"/><circle cx="4" cy="24" r="3.4" fill="#afb1b3"/><path d="M4 3.6V24M4 18.5C11 17 16 13 16 6" fill="none" stroke="#afb1b3" stroke-width="3.2"/></svg><div class="t" style="left:2810px;top:1702px;font-size:23.3px;line-height:32px;color:#bbbbbb;">personal/gqcn</div><svg style="left:2973px;top:1705px" width="24" height="24"><path d="M2.5 11.5V6.5A5 5 0 0 1 12.5 6.5V11" fill="none" stroke="#afb1b3" stroke-width="3"/><rect x="7" y="10.7" width="16" height="12.3" fill="#afb1b3"/></svg><svg style="left:3018px;top:1702px" width="36" height="34"><circle cx="8.3" cy="15.6" r="6.5" fill="#afb1b3"/><circle cx="18" cy="10.4" r="8.5" fill="#afb1b3"/><circle cx="26.2" cy="14.9" r="6" fill="#afb1b3"/><rect x="8.3" y="13" width="18" height="9.1" fill="#afb1b3"/><path d="M14.3 9A3.6 3.6 0 1 1 19.6 12.2C18 13.2 17 14.2 17 16" fill="none" stroke="#3c3f41" stroke-width="2.2"/><circle cx="17" cy="19" r="1.4" fill="#3c3f41"/><circle cx="27" cy="24.6" r="9" fill="#3c3f41"/><g transform="translate(27 24.6)" fill="#afb1b3"><circle r="5.4"/><rect x="-1.6" y="-7.2" width="3.2" height="14.4"/><rect x="-1.6" y="-7.2" width="3.2" height="14.4" transform="rotate(60)"/><rect x="-1.6" y="-7.2" width="3.2" height="14.4" transform="rotate(120)"/><circle r="2.3" fill="#3c3f41"/></g></svg></body></html>
